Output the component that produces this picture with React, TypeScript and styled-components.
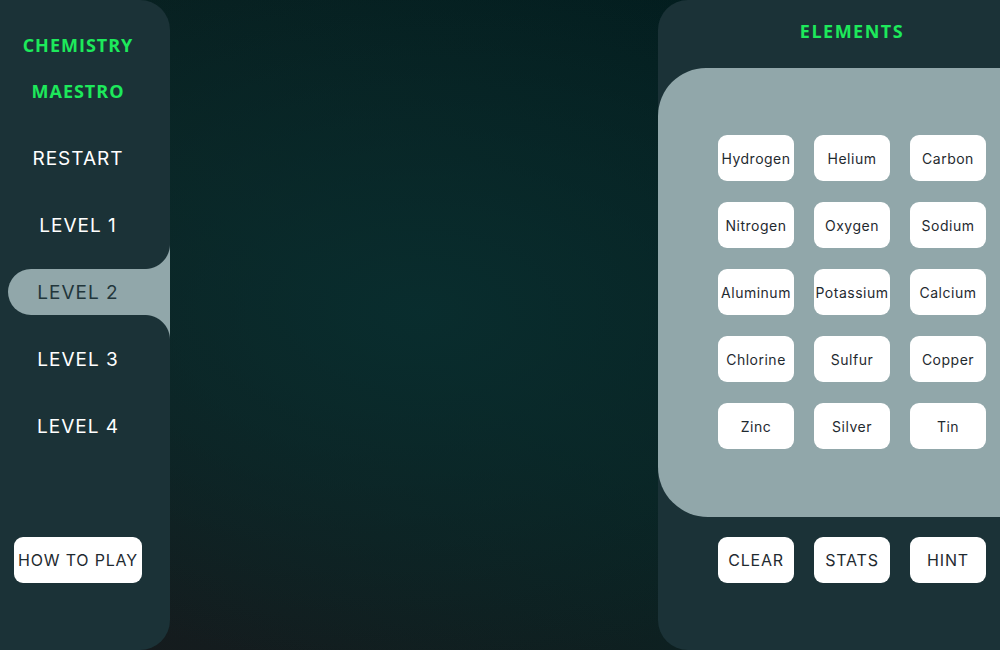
import React from "react";
import styled, { createGlobalStyle } from "styled-components";

const Global = createGlobalStyle`
  html, body {
    margin: 0;
    padding: 0;
    width: 1000px;
    height: 650px;
    overflow: hidden;
    background: #0a1f20;
  }
  * { box-sizing: border-box; }
`;

const Page = styled.div`
  width: 1000px;
  height: 650px;
  overflow: hidden;
  display: grid;
  grid-template-columns: 170px 488px 388px;
  background:
    radial-gradient(ellipse 60% 55% at 42% 48%, rgba(9, 46, 47, 0.9) 0%, rgba(9, 46, 47, 0) 100%),
    linear-gradient(to top right, #171a1d 0%, #0a2222 45%, #001b1d 100%);
  font-family: Inter, "Noto Sans", sans-serif;
`;

const Sidebar = styled.aside`
  background: #1b3237;
  border-radius: 0 30px 30px 0;
  display: flex;
  flex-direction: column;
  overflow: hidden;
`;

const Title = styled.h1`
  margin: 0;
  padding: 22px 14px 0 0;
  font-family: "Open Sans", "Noto Sans", sans-serif;
  font-weight: 700;
  font-size: 18px;
  letter-spacing: 1px;
  line-height: 46px;
  text-align: center;
  color: #1de95b;
`;

const Menu = styled.nav`
  display: flex;
  flex-direction: column;
  gap: 21px;
  margin-top: 21px;
`;

const MenuItem = styled.div<{ $active?: boolean }>`
  position: relative;
  height: 46px;
  display: flex;
  align-items: center;
  justify-content: center;
  font-size: 19px;
  letter-spacing: 1px;
  color: ${(p) => (p.$active ? "#22363b" : "#ffffff")};
  background: ${(p) => (p.$active ? "#91a7aa" : "transparent")};
  margin-left: ${(p) => (p.$active ? "8px" : "0")};
  padding-right: ${(p) => (p.$active ? "22px" : "14px")};
  border-radius: ${(p) => (p.$active ? "23px 0 0 23px" : "0")};

  ${(p) =>
    p.$active &&
    `
    &::before, &::after {
      content: "";
      position: absolute;
      right: 0;
      width: 25px;
      height: 25px;
    }
    &::before {
      bottom: 100%;
      background: radial-gradient(circle at 0 0, transparent 24.5px, #91a7aa 25.5px);
    }
    &::after {
      top: 100%;
      background: radial-gradient(circle at 0 100%, transparent 24.5px, #91a7aa 25.5px);
    }
  `}
`;

const SideFooter = styled.div`
  margin-top: auto;
  padding: 0 28px 67px 14px;
`;

const Button = styled.button<{ $small?: boolean; $w?: number }>`
  width: ${(p) => (p.$w ? `${p.$w}px` : "100%")};
  height: 46px;
  border: none;
  border-radius: 9px;
  background: #ffffff;
  color: #1f2a30;
  font-family: Inter, "Noto Sans", sans-serif;
  font-size: ${(p) => (p.$small ? "14px" : "16px")};
  letter-spacing: ${(p) => (p.$small ? "0.5px" : "0.8px")};
  display: flex;
  align-items: center;
  justify-content: center;
  padding: 0;
  white-space: nowrap;
`;

const Middle = styled.main``;

const RightPanel = styled.section`
  background: #1b3237;
  border-radius: 30px 0 0 30px;
  display: flex;
  flex-direction: column;
`;

const PanelTitle = styled.h2`
  margin: 0;
  height: 68px;
  padding-top: 20px;
  font-family: "Open Sans", "Noto Sans", sans-serif;
  font-weight: 700;
  font-size: 18px;
  letter-spacing: 1.5px;
  line-height: 22px;
  text-align: center;
  color: #1de95b;
`;

const Board = styled.div`
  background: #91a7aa;
  border-radius: 48px 0 0 50px;
  padding: 67px 0 68px;
  display: flex;
  justify-content: center;
`;

const Grid = styled.div`
  display: grid;
  grid-template-columns: repeat(3, 76px);
  column-gap: 20px;
  row-gap: 21px;
`;

const Actions = styled.div`
  margin-top: 20px;
  display: flex;
  justify-content: center;
  gap: 20px;
`;

const elements = [
  "Hydrogen", "Helium", "Carbon",
  "Nitrogen", "Oxygen", "Sodium",
  "Aluminum", "Potassium", "Calcium",
  "Chlorine", "Sulfur", "Copper",
  "Zinc", "Silver", "Tin",
];

const menu = ["RESTART", "LEVEL 1", "LEVEL 2", "LEVEL 3", "LEVEL 4"];

export default function App() {
  return (
    <>
      <Global />
      <Page>
        <Sidebar>
          <Title>
            CHEMISTRY
            <br />
            MAESTRO
          </Title>
          <Menu>
            {menu.map((m) => (
              <MenuItem key={m} $active={m === "LEVEL 2"}>
                {m}
              </MenuItem>
            ))}
          </Menu>
          <SideFooter>
            <Button>HOW TO PLAY</Button>
          </SideFooter>
        </Sidebar>
        <Middle />
        <RightPanel>
          <PanelTitle>ELEMENTS</PanelTitle>
          <Board>
            <Grid>
              {elements.map((e) => (
                <Button key={e} $small>
                  {e}
                </Button>
              ))}
            </Grid>
          </Board>
          <Actions>
            <Button $w={76}>CLEAR</Button>
            <Button $w={76}>STATS</Button>
            <Button $w={76}>HINT</Button>
          </Actions>
        </RightPanel>
      </Page>
    </>
  );
}
